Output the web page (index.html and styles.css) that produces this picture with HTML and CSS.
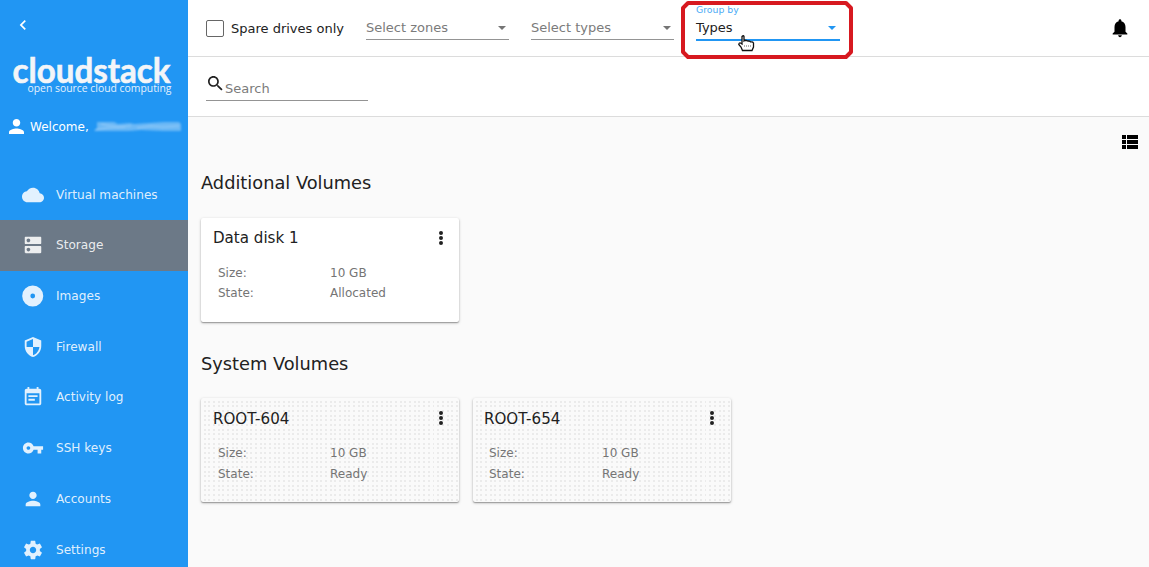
FILE: index.html
```html
<!DOCTYPE html>
<html lang="en">
<head>
<meta charset="utf-8">
<title>CloudStack - Storage</title>
<link rel="stylesheet" href="styles.css">
</head>
<body>
<div class="app">
  <aside class="sidebar">
    <svg class="back" viewBox="0 0 24 24"><path d="M15.41 7.41 14 6l-6 6 6 6 1.41-1.41L10.830 12z"/></svg>
    <svg class="logo" viewBox="0 0 188 50">
      <text class="logo-name" x="12.500" y="33" textLength="158" lengthAdjust="spacingAndGlyphs">cloudstack</text>
      <text class="logo-tag" x="27.500" y="42" textLength="144" lengthAdjust="spacingAndGlyphs">open source cloud computing</text>
    </svg>
    <div class="welcome">
      <svg class="user" viewBox="4 4 16 16"><path d="M12 12c2.210 0 4-1.790 4-4s-1.790-4-4-4-4 1.790-4 4 1.790 4 4 4zm0 2c-2.670 0-8 1.340-8 4v2h16v-2c0-2.660-5.330-4-8-4z"/></svg>
      <span class="hello">Welcome,</span>
      <svg class="smudge" viewBox="0 0 90 14"><path class="s1" d="M4 2h17l4 2 12-1 4 1 30-2 15 0 2 2v7H70l-22-1-12 1H1l3-3z"/><path class="s2" d="M2 10l12-2 18-1M8 4l16 3 14-1M44 8l14-2 12 1 16-1"/></svg>
    </div>
    <nav class="menu">
      <a class="item"><svg class="mi" viewBox="0 0 24 24"><path d="M19.350 10.040C18.670 6.590 15.640 4 12 4 9.110 4 6.600 5.640 5.350 8.040 2.340 8.360 0 10.910 0 14c0 3.310 2.690 6 6 6h13c2.760 0 5-2.240 5-5 0-2.640-2.050-4.780-4.650-4.960z"/></svg><span>Virtual machines</span></a>
      <a class="item active"><svg class="mi" viewBox="0 0 24 24"><path d="M20 13H4c-.550 0-1 .450-1 1v6c0 .550.450 1 1 1h16c.550 0 1-.450 1-1v-6c0-.550-.450-1-1-1zM7 19c-1.100 0-2-.900-2-2s.900-2 2-2 2 .900 2 2-.900 2-2 2zM20 3H4c-.550 0-1 .450-1 1v6c0 .550.450 1 1 1h16c.550 0 1-.450 1-1V4c0-.550-.450-1-1-1zM7 9c-1.100 0-2-.900-2-2s.900-2 2-2 2 .900 2 2-.900 2-2 2z"/></svg><span>Storage</span></a>
      <a class="item"><svg class="mi" viewBox="0 0 24 24"><path fill-rule="evenodd" d="M11.700.500a11.500 11.500 0 1 0 0 23 11.500 11.500 0 0 0 0-23zm0 8.900a2.600 2.600 0 1 1 0 5.200 2.600 2.600 0 0 1 0-5.200z"/></svg><span>Images</span></a>
      <a class="item"><svg class="mi" viewBox="0 0 24 24"><path d="M12 1 3 5v6c0 5.550 3.840 10.740 9 12 5.160-1.260 9-6.450 9-12V5l-9-4zm0 10.990h7c-.530 4.120-3.280 7.790-7 8.940V12H5V6.300l7-3.110v8.800z"/></svg><span>Firewall</span></a>
      <a class="item"><svg class="mi" viewBox="0 0 24 24"><path d="M17 10H7v2h10v-2zm2-7h-1V1h-2v2H8V1H6v2H5c-1.110 0-1.990.900-1.990 2L3 19c0 1.100.890 2 2 2h14c1.100 0 2-.900 2-2V5c0-1.100-.900-2-2-2zm0 16H5V8h14v11zm-5-5H7v2h7v-2z"/></svg><span>Activity log</span></a>
      <a class="item"><svg class="mi" viewBox="0 0 24 24"><path d="M12.650 10C11.830 7.670 9.610 6 7 6c-3.310 0-6 2.690-6 6s2.690 6 6 6c2.610 0 4.830-1.670 5.650-4H17v4h4v-4h2v-4H12.650zM7 14c-1.100 0-2-.900-2-2s.900-2 2-2 2 .900 2 2-.900 2-2 2z"/></svg><span>SSH keys</span></a>
      <a class="item"><svg class="mi" viewBox="0 0 24 24"><path d="M12 12c2.210 0 4-1.790 4-4s-1.790-4-4-4-4 1.790-4 4 1.790 4 4 4zm0 2c-2.670 0-8 1.340-8 4v2h16v-2c0-2.660-5.330-4-8-4z"/></svg><span>Accounts</span></a>
      <a class="item"><svg class="mi" viewBox="0 0 24 24"><path d="M19.430 12.980c.040-.320.070-.640.070-.980s-.030-.660-.070-.980l2.110-1.650c.190-.150.240-.420.120-.640l-2-3.460c-.120-.220-.390-.300-.610-.220l-2.490 1c-.520-.400-1.080-.730-1.690-.980l-.380-2.650C14.460 2.180 14.250 2 14 2h-4c-.250 0-.460.180-.490.420l-.380 2.650c-.610.250-1.170.590-1.690.980l-2.490-1c-.230-.090-.490 0-.610.220l-2 3.460c-.130.220-.070.490.120.640l2.110 1.650c-.040.320-.070.650-.070.980s.030.660.070.980l-2.110 1.650c-.190.150-.240.420-.120.640l2 3.460c.120.220.390.300.610.220l2.490-1c.520.400 1.080.730 1.690.980l.380 2.650c.030.240.240.420.490.420h4c.250 0 .460-.180.490-.420l.380-2.650c.610-.250 1.170-.590 1.690-.980l2.490 1c.230.090.490 0 .610-.220l2-3.460c.120-.220.070-.490-.120-.640l-2.110-1.650zM12 15.500c-1.930 0-3.500-1.570-3.500-3.500s1.570-3.500 3.500-3.500 3.500 1.570 3.500 3.500-1.570 3.500-3.500 3.500z"/></svg><span>Settings</span></a>
    </nav>
  </aside>
  <main class="main">
    <header class="toolbar">
      <span class="checkbox"></span>
      <span class="check-label">Spare drives only</span>
      <div class="select zones"><span>Select zones</span><i class="caret"></i></div>
      <div class="select types"><span>Select types</span><i class="caret"></i></div>
      <div class="group">
        <div class="group-label">Group by</div>
        <div class="select focused"><span>Types</span><i class="caret"></i></div>
        <svg class="highlight" viewBox="0 0 174 60"><path d="M8 3h158l5 5v44l-5 5H8l-5-5V8z"/></svg>
        <svg class="cursor" viewBox="0 0 17 17"><path d="M4 1.500q1.500-1.500 2 0V6l1-.700 1.500.200L10 6l1.500.200L13 7q1.700-.500 2.500 1v4L14 15.500H4.500L3 12 .800 9.500Q1 7.500 2.500 8L4 9z"/><path class="grip" d="M6 11h1M8 11h1M10 11h1M12 11h1"/></svg>
      </div>
      <svg class="bell" viewBox="0 0 24 24"><path d="M12 22c1.100 0 2-.900 2-2h-4c0 1.100.890 2 2 2zm6-6v-5c0-3.070-1.640-5.640-4.500-6.320V4c0-.830-.670-1.500-1.500-1.500s-1.500.670-1.500 1.500v.680C7.630 5.360 6 7.920 6 11v5l-2 2v1h16v-1l-2-2z"/></svg>
    </header>
    <div class="searchbar">
      <div class="search">
        <svg class="lens" viewBox="3 3 18 18"><path d="M15.500 14h-.790l-.280-.270C15.410 12.590 16 11.110 16 9.500 16 5.910 13.090 3 9.500 3S3 5.910 3 9.500 5.910 16 9.500 16c1.610 0 3.090-.590 4.230-1.570l.270.280v.790l5 4.990L20.490 19l-4.990-5zm-6 0C7.010 14 5 11.990 5 9.500S7.010 5 9.500 5 14 7.010 14 9.500 11.990 14 9.500 14z"/></svg>
        <span>Search</span>
      </div>
    </div>
    <section class="content">
      <svg class="listview" viewBox="0 0 16 14"><path d="M0 0h4v4H0zM5 0h11v4H5zM0 5h4v4H0zM5 5h11v4H5zM0 10h4v4H0zM5 10h11v4H5z"/></svg>
      <h2 class="h-add">Additional Volumes</h2>
      <div class="cards">
        <article class="card">
          <div class="head"><h3>Data disk 1</h3><svg class="more" viewBox="0 0 4 14"><path d="M2 0a2 2 0 1 1 0 4 2 2 0 0 1 0-4zm0 5a2 2 0 1 1 0 4 2 2 0 0 1 0-4zm0 5a2 2 0 1 1 0 4 2 2 0 0 1 0-4z"/></svg></div>
          <dl><dt>Size:</dt><dd>10 GB</dd><dt>State:</dt><dd>Allocated</dd></dl>
        </article>
      </div>
      <h2 class="h-sys">System Volumes</h2>
      <div class="cards system">
        <article class="card dotted">
          <div class="head"><h3>ROOT-604</h3><svg class="more" viewBox="0 0 4 14"><path d="M2 0a2 2 0 1 1 0 4 2 2 0 0 1 0-4zm0 5a2 2 0 1 1 0 4 2 2 0 0 1 0-4zm0 5a2 2 0 1 1 0 4 2 2 0 0 1 0-4z"/></svg></div>
          <dl><dt>Size:</dt><dd>10 GB</dd><dt>State:</dt><dd>Ready</dd></dl>
        </article>
        <article class="card dotted second">
          <div class="head"><h3>ROOT-654</h3><svg class="more" viewBox="0 0 4 14"><path d="M2 0a2 2 0 1 1 0 4 2 2 0 0 1 0-4zm0 5a2 2 0 1 1 0 4 2 2 0 0 1 0-4zm0 5a2 2 0 1 1 0 4 2 2 0 0 1 0-4z"/></svg></div>
          <dl><dt>Size:</dt><dd>10 GB</dd><dt>State:</dt><dd>Ready</dd></dl>
        </article>
      </div>
    </section>
  </main>
</div>
</body>
</html>
```
FILE: styles.css
```css
* { box-sizing: border-box; }
body { margin: 0; font-family: "DejaVu Sans", sans-serif; color: #212121; overflow: hidden; }
svg { display: block; flex: none; }
.app { display: flex; width: 1149px; height: 567px; overflow: hidden; }

.sidebar { width: 188px; flex: none; background: #2196f3; color: #fff; fill: #fff; overflow: hidden; }
.back { width: 20px; height: 20px; margin: 14.500px 0 0 13px; }
.logo { width: 188px; height: 50px; margin-top: 15.500px; overflow: visible; }
.logo-name { font: 700 35px Lato, sans-serif; fill: #f3f5f8; stroke: #f3f5f8; stroke-width: .6; }
.logo-tag { font: 400 11px "Open Sans", sans-serif; fill: #e3f1fd; }
.welcome { display: flex; align-items: center; height: 20px; margin-top: 16.500px; padding-left: 9px; }
.user { width: 15px; height: 15px; }
.hello { margin-left: 6px; font-size: 12px; white-space: nowrap; }
.smudge { width: 90px; height: 14px; margin-left: 4px; filter: blur(.8px); }
.s1 { fill: #6bb8f6; }
.s2 { fill: none; stroke: #98cdf8; stroke-width: 1.2; }
.menu { margin-top: 32.900px; }
.item { display: flex; align-items: center; height: 50.700px; padding-left: 22px; color: rgba(255,255,255,.87); fill: rgba(255,255,255,.87); font-size: 12.100px; }
.item.active { background: #6c7987; }
.mi { width: 22px; height: 22px; margin-right: 12px; }

.main { flex: 1; min-width: 0; background: #fafafa; }
.toolbar { display: flex; align-items: flex-start; height: 57px; padding-left: 18px; background: #fff; border-bottom: 1px solid #dcdcdc; }
.checkbox { width: 18px; height: 17px; margin-top: 20px; border: 1px solid #666; border-radius: 2px; flex: none; }
.check-label { width: 135px; margin: 20px 0 0 7px; font-size: 13px; line-height: 17px; white-space: nowrap; }
.select { display: flex; align-items: center; justify-content: space-between; width: 143px; height: 24px; margin-top: 16px; padding-right: 3px; border-bottom: 1px solid #949494; color: #7b7b7b; font-size: 13px; }
.caret { border: 4px solid transparent; border-top-color: #757575; border-bottom: 0; }
.types { margin-left: 22px; }
.group { position: relative; width: 144px; margin-left: 22px; }
.group-label { height: 16px; padding-top: 4px; color: #4aaaf5; font-size: 9.300px; line-height: 12px; }
.focused { width: 144px; height: 25px; margin: 0; border-bottom: 2px solid #2196f3; color: #212121; padding-right: 4px; }
.focused .caret { border-top-color: #2196f3; }
.highlight { position: absolute; left: -16px; top: 0; width: 174px; height: 60px; fill: none; stroke: #d71920; stroke-width: 4; stroke-linejoin: round; }
.cursor { position: absolute; left: 42px; top: 35px; width: 17px; height: 17px; fill: #fff; stroke: #111; stroke-width: 1.3; }
.grip { stroke: #999; }
.bell { width: 22px; height: 22px; margin: 17px 18px 0 auto; fill: #000; }
.searchbar { height: 60px; padding: 18px 0 0 18px; background: #fff; border-bottom: 1px solid #dcdcdc; }
.search { display: flex; width: 162px; height: 26px; border-bottom: 1px solid #949494; padding-left: 2px; color: #7b7b7b; font-size: 13px; line-height: 27px; }
.search span { margin-left: 1px; }
.lens { width: 15px; height: 15px; margin-top: 1px; margin-right: 1px; fill: #212121; }

.content { padding: 18px 0 0 13px; }
.listview { width: 16px; height: 14px; margin-left: 921px; fill: #000; }
h2 { margin: 0; font-size: 17.800px; font-weight: 400; line-height: 24px; }
.h-add { margin-top: 22px; }
.h-sys { margin-top: 30px; }
.cards { display: flex; gap: 14px; margin-top: 23px; }
.system { margin-top: 22px; }
.card { width: 258px; height: 104px; padding: 10px 12px; background: #fff; border-radius: 2px; box-shadow: 0 1px 1px rgba(0,0,0,.24), 0 1px 3px rgba(0,0,0,.26); }
.dotted {
  background:
    repeating-linear-gradient(90deg, #fafafa 0 2.670px, transparent 2.670px 4.670px),
    repeating-linear-gradient(180deg, #fafafa 0 2.670px, transparent 2.670px 4.670px),
    #ebebeb;
}
.head { display: flex; justify-content: space-between; align-items: center; height: 20px; }
.dotted h3 { padding-top: 1px; }
.second { padding-left: 11px; padding-right: 13px; }
h3 { margin: 0; font-size: 15.100px; font-weight: 400; line-height: 20px; }
.more { width: 4px; height: 14px; margin-right: 4px; fill: #212121; }
dl { display: grid; grid-template-columns: 112px 1fr; grid-auto-rows: 20px; margin: 15px 0 0 5px; color: #757575; font-size: 12px; line-height: 20px; }
.dotted dl { grid-auto-rows: 21px; }
.second dl { grid-template-columns: 113px 1fr; }
dd { margin: 0; }
```
